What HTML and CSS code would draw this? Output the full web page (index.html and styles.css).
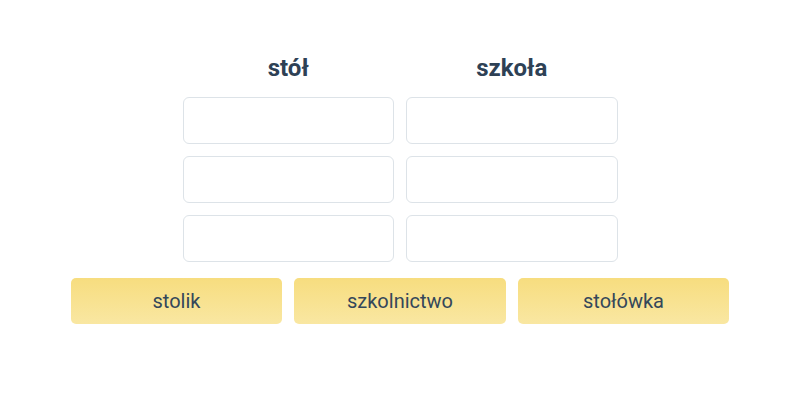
FILE: index.html
```html
<!DOCTYPE html>
<html lang="pl">
  <head>
    <meta charset="UTF-8" />
    <meta name="viewport" content="width=device-width, initial-scale=1.0" />
    <title>Grupy wyrazów</title>
    <link rel="stylesheet" href="styles.css">
  </head>
  <body>
    <div class="exercise">
      <div class="columns">
        <div class="column">
          <h2>stół</h2>
          <div class="slot"></div>
          <div class="slot"></div>
          <div class="slot"></div>
        </div>
        <div class="column">
          <h2>szkoła</h2>
          <div class="slot"></div>
          <div class="slot"></div>
          <div class="slot"></div>
        </div>
      </div>
      <div class="words">
        <button class="word">stolik</button>
        <button class="word">szkolnictwo</button>
        <button class="word">stołówka</button>
      </div>
    </div>
  </body>
</html>
```

FILE: styles.css
```css
body {
  font-family: Roboto, "Liberation Sans", sans-serif;
  background-color: #fff;
  color: #2c3e50;
  margin: 0;
  padding: 0;
}
.exercise {
  display: flex;
  flex-direction: column;
  align-items: center;
  padding-top: 53px;
}
.columns {
  display: flex;
  gap: 12px;
}
.column {
  display: flex;
  flex-direction: column;
  gap: 12px;
  width: 211.5px;
}
.column h2 {
  margin: 0 0 2px;
  font-size: 24px;
  line-height: 30px;
  font-weight: bold;
  text-align: center;
  color: #2e4155;
}
.slot {
  height: 45px;
  border: 1px solid #dde3e8;
  border-radius: 6px;
  background-color: #fff;
}
.words {
  display: flex;
  gap: 12px;
  margin-top: 16px;
}
.word {
  width: 211.5px;
  height: 46px;
  border: none;
  border-radius: 5px;
  background: linear-gradient(to bottom, #f7dd7f, #f9e7a2);
  color: #34475a;
  font-family: Roboto, "Liberation Sans", sans-serif;
  font-size: 20px;
  cursor: pointer;
}
```
